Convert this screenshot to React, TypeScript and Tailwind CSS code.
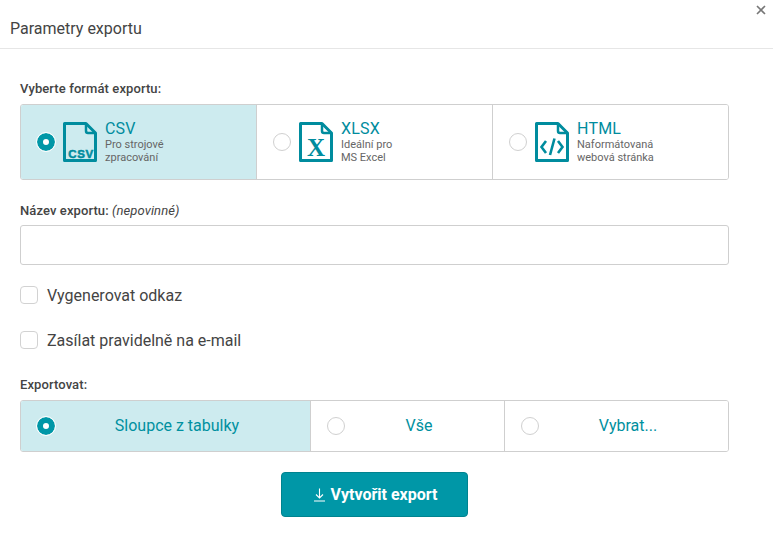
import React from "react";

const ICON = "#008c9e";

function Radio({ on }: { on: boolean }) {
  return on ? (
    <span className="h-[18px] w-[18px] shrink-0 rounded-full border-[6px] border-[#0097a7] bg-white outline outline-1 outline-white" />
  ) : (
    <span className="h-[18px] w-[18px] shrink-0 rounded-full border border-[#d0d0d0] bg-white" />
  );
}

function FileIcon({ children }: { children: React.ReactNode }) {
  return (
    <svg width="34" height="40" viewBox="0 0 34 40" className="shrink-0" fill="none">
      <path d="M1.5 1.5H23L32.5 11V38.5H1.5Z" stroke={ICON} strokeWidth="3" strokeLinejoin="round" />
      <path d="M23 1.5V9Q23 11 25 11H32.5" stroke={ICON} strokeWidth="2.5" strokeLinejoin="round" />
      {children}
    </svg>
  );
}

function FormatCell({ on, name, l1, l2, icon, cls }: { on?: boolean; name: string; l1: string; l2: string; icon: React.ReactNode; cls: string }) {
  return (
    <div className={`flex items-center pl-[16px] ${cls} ${on ? "bg-[#cdebef]" : "bg-white"}`}>
      <Radio on={!!on} />
      <div className="ml-[8px] flex items-center gap-[8px]">
        <FileIcon>{icon}</FileIcon>
        <div className="-mt-[1px]">
          <div className="text-[16px] leading-[18px] tracking-[0.2px] text-[#008c9e]">{name}</div>
          <div className="text-[11px] leading-[13px] text-[#666]">{l1}</div>
          <div className="text-[11px] leading-[13px] text-[#666]">{l2}</div>
        </div>
      </div>
    </div>
  );
}

function ExportCell({ on, label, cls }: { on?: boolean; label: string; cls: string }) {
  return (
    <div className={`flex items-center pl-[16px] ${cls} ${on ? "bg-[#cdebef]" : "bg-white"}`}>
      <Radio on={!!on} />
      <span className="flex-1 pr-[11px] text-center text-[16px] leading-[20px] text-[#0090a0]">{label}</span>
    </div>
  );
}

function Check({ label }: { label: string }) {
  return (
    <div className="flex h-[18px] items-center gap-[9px]">
      <span className="h-[18px] w-[18px] rounded-[4px] border border-[#d2d2d2] bg-white" />
      <span className="mt-[2px] text-[16px] text-[#444]">{label}</span>
    </div>
  );
}

export default function App() {
  return (
    <div className="relative h-[541px] w-[773px] overflow-hidden bg-white font-['Roboto',sans-serif]">
      <button className="absolute right-[7px] top-[5px] text-[#777]">
        <svg width="10" height="10" viewBox="0 0 10 10"><path d="M1 1L9 9M9 1L1 9" stroke="#777" strokeWidth="1.6" /></svg>
      </button>
      <header className="flex h-[49px] items-center border-b border-[#e6e6e6] pl-[10px] pt-[9px] text-[16px] text-[#444]">
        Parametry exportu
      </header>
      <div className="ml-[20px] w-[709px] pt-[32px]">
        <div className="text-[13px] font-medium leading-[16px] tracking-[0.1px] text-[#444]">Vyberte formát exportu:</div>
        <div className="mt-[7px] flex h-[76px] overflow-hidden rounded-[3px] border border-[#cfcfcf]">
          <FormatCell
            on
            name="CSV"
            l1="Pro strojové"
            l2="zpracování"
            cls="w-[236px] border-r border-[#cfcfcf]"
            icon={<text x="18" y="36" textAnchor="middle" fontSize="11.5" fontWeight="700" letterSpacing="0.7" stroke={ICON} strokeWidth="0.5" fill={ICON} fontFamily="'Liberation Sans',sans-serif">CSV</text>}
          />
          <FormatCell
            name="XLSX"
            l1="Ideální pro"
            l2="MS Excel"
            cls="w-[236px] border-r border-[#cfcfcf]"
            icon={<text x="17" y="34" textAnchor="middle" fontSize="25" fontWeight="700" fill={ICON} fontFamily="'Liberation Serif',serif">X</text>}
          />
          <FormatCell
            name="HTML"
            l1="Naformátovaná"
            l2="webová stránka"
            cls="flex-1"
            icon={<path d="M11 19L6.5 25L11 31M23 19L27.5 25L23 31M19.5 16.5L15 33" stroke={ICON} strokeWidth="2.6" />}
          />
        </div>
        <div className="mt-[23px] text-[13px] leading-[16px] tracking-[0.1px] text-[#444]">
          <span className="font-medium">Název exportu:</span> <i>(nepovinné)</i>
        </div>
        <div className="mt-[6px] h-[40px] rounded-[3px] border border-[#cfcfcf] bg-white" />
        <div className="mt-[21px]"><Check label="Vygenerovat odkaz" /></div>
        <div className="mt-[27px]"><Check label="Zasílat pravidelně na e-mail" /></div>
        <div className="mt-[28px] text-[13px] font-medium leading-[16px] tracking-[0.1px] text-[#444]">Exportovat:</div>
        <div className="mt-[7px] flex h-[52px] overflow-hidden rounded-[3px] border border-[#cfcfcf]">
          <ExportCell on label="Sloupce z tabulky" cls="w-[290px] border-r border-[#cfcfcf]" />
          <ExportCell label="Vše" cls="w-[194px] border-r border-[#cfcfcf]" />
          <ExportCell label="Vybrat..." cls="flex-1" />
        </div>
        <div className="mt-[20px] flex justify-center">
          <button className="flex h-[45px] w-[187px] items-center justify-center gap-[6px] rounded-[4px] border border-[#00838f] bg-[#0097a7] pl-[2px] text-[16px] font-bold text-white">
            <svg width="11" height="14" viewBox="0 0 11 14" fill="none"><path d="M5.5 0.5V10M2 6.5L5.5 10L9 6.5M0 13H11" stroke="white" strokeWidth="1.1" /></svg>
            Vytvořit export
          </button>
        </div>
      </div>
    </div>
  );
}
